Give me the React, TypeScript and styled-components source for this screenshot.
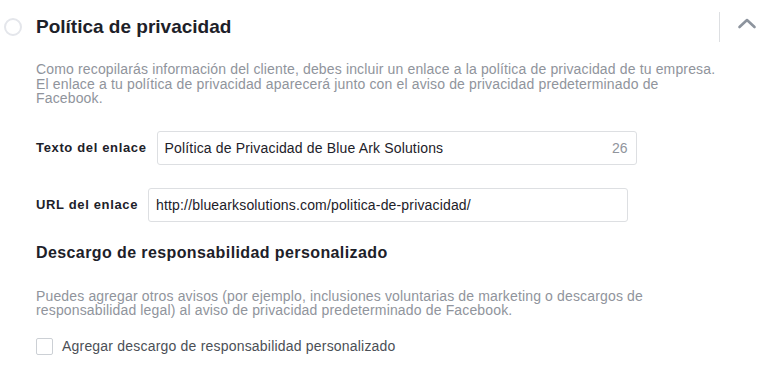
import React from "react";
import styled, { createGlobalStyle } from "styled-components";

const Global = createGlobalStyle`
  html, body { margin: 0; padding: 0; background: #ffffff; }
  body { font-family: "Liberation Sans", Arial, sans-serif; color: #1d2129; }
  * { box-sizing: border-box; }
`;

const Panel = styled.section`
  width: 770px;
  height: 387px;
  background: #ffffff;
`;

const Header = styled.header`
  display: flex;
  align-items: center;
  height: 54px;
`;

const StepCircle = styled.span`
  width: 18px;
  height: 18px;
  margin-left: 4px;
  border: 2px solid #e4e6eb;
  border-radius: 50%;
  flex: none;
`;

const Title = styled.h2`
  margin: 0 0 0 14px;
  font-size: 19px;
  font-weight: bold;
  color: #1d2129;
  flex: 1;
`;

const Divider = styled.span`
  width: 1px;
  height: 30px;
  background: #dddfe2;
  flex: none;
`;

const Toggle = styled.button`
  width: 50px;
  height: 20px;
  margin-bottom: 9px;
  border: 0;
  background: transparent;
  padding: 0 0 0 4px;
  display: flex;
  align-items: center;
  justify-content: center;
  cursor: pointer;
`;

const Body = styled.div`
  padding: 8px 46px 0 36px;
`;

const Description = styled.p<{ $mt?: number }>`
  margin: ${(p) => p.$mt ?? 0}px 0 0;
  font-size: 14px;
  letter-spacing: 0.15px;
  line-height: 14.5px;
  color: #90949c;
`;

const FieldRow = styled.div<{ $mt: number }>`
  display: flex;
  align-items: center;
  gap: 10px;
  margin-top: ${(p) => p.$mt}px;
`;

const Label = styled.label`
  font-size: 13px;
  letter-spacing: 0.65px;
  font-weight: bold;
  color: #1d2129;
`;

const InputBox = styled.div`
  width: 480px;
  height: 34px;
  border: 1px solid #dddfe2;
  border-radius: 3px;
  display: flex;
  align-items: center;
  padding: 0 8px 0 7px;
`;

const InputText = styled.span`
  flex: 1;
  font-size: 14px;
  letter-spacing: 0.16px;
  color: #1d2129;
`;

const Counter = styled.span`
  font-size: 14px;
  color: #90949c;
`;

const Subheading = styled.h3`
  margin: 22px 0 0;
  font-size: 16px;
  letter-spacing: 0.4px;
  font-weight: bold;
  color: #1d2129;
`;

const CheckRow = styled.label`
  display: flex;
  align-items: center;
  gap: 9px;
  margin-top: 20px;
  font-size: 14px;
  letter-spacing: 0.2px;
  color: #4b4f56;
`;

const CheckBox = styled.span`
  width: 17px;
  height: 17px;
  border: 1px solid #ccd0d5;
  border-radius: 2px;
  background: #fff;
  flex: none;
`;

export default function App() {
  return (
    <>
      <Global />
      <Panel>
        <Header>
          <StepCircle />
          <Title>Política de privacidad</Title>
          <Divider />
          <Toggle aria-label="Contraer">
            <svg width="20" height="12" viewBox="0 0 20 12">
              <path d="M2.5 10 L10 3 L17.5 10" fill="none" stroke="#8d949e" strokeWidth="2.6" strokeLinecap="round" strokeLinejoin="round" />
            </svg>
          </Toggle>
        </Header>
        <Body>
          <Description>
            Como recopilarás información del cliente, debes incluir un enlace a la política de privacidad de tu empresa. El enlace a tu política de privacidad aparecerá junto con el aviso de privacidad predeterminado de Facebook.
          </Description>
          <FieldRow $mt={25}>
            <Label>Texto del enlace</Label>
            <InputBox>
              <InputText>Política de Privacidad de Blue Ark Solutions</InputText>
              <Counter>26</Counter>
            </InputBox>
          </FieldRow>
          <FieldRow $mt={23}>
            <Label>URL del enlace</Label>
            <InputBox>
              <InputText>http://bluearksolutions.com/politica-de-privacidad/</InputText>
            </InputBox>
          </FieldRow>
          <Subheading>Descargo de responsabilidad personalizado</Subheading>
          <Description $mt={27}>
            Puedes agregar otros avisos (por ejemplo, inclusiones voluntarias de marketing o descargos de responsabilidad legal) al aviso de privacidad predeterminado de Facebook.
          </Description>
          <CheckRow>
            <CheckBox />
            Agregar descargo de responsabilidad personalizado
          </CheckRow>
        </Body>
      </Panel>
    </>
  );
}
